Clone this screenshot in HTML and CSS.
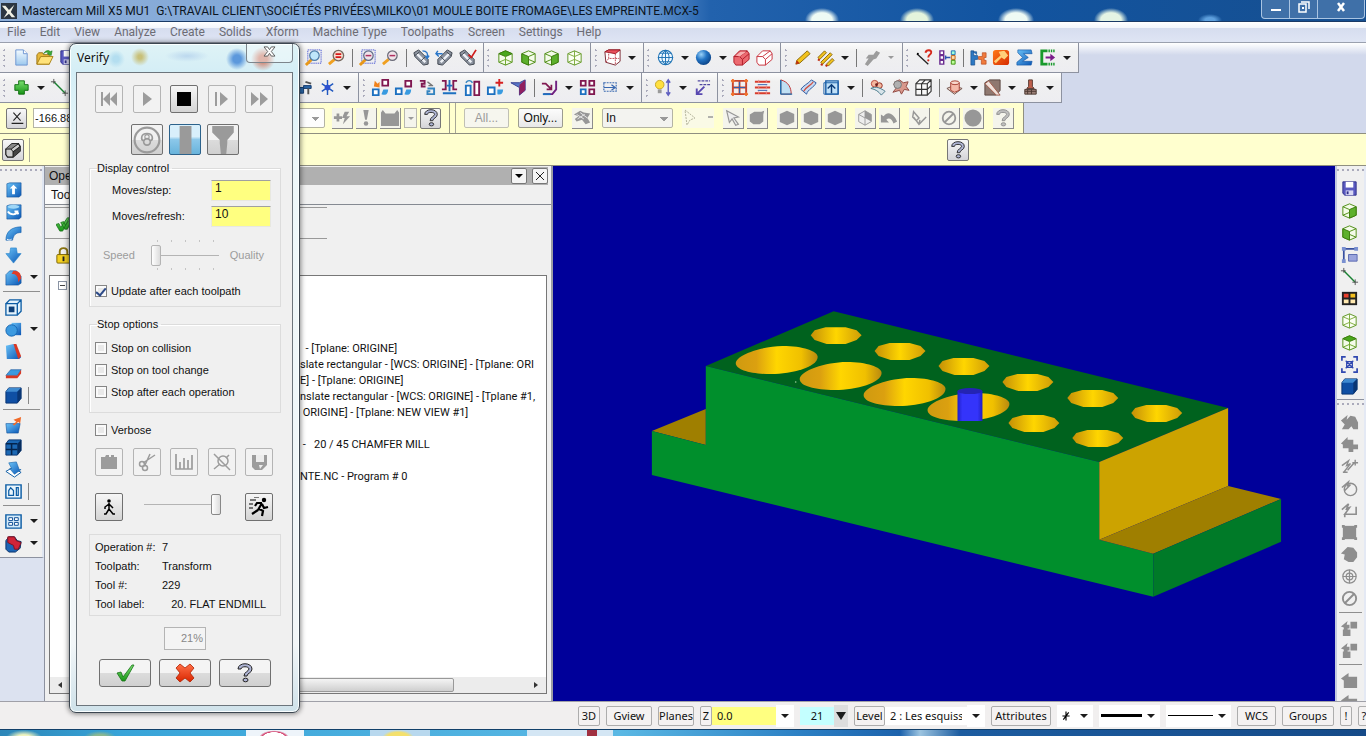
FILE: index.html
```html
<!DOCTYPE html>
<html lang="en">
<head>
<meta charset="utf-8">
<title>Mastercam Mill X5 MU1</title>
<link rel="stylesheet" href="styles.css">
</head>
<body>
<svg class="defs" aria-hidden="true">
  <defs>
    <linearGradient id="gb" x1="0" y1="0" x2="1" y2="1"><stop offset="0" stop-color="#6cc4f8"/><stop offset="1" stop-color="#0a55b4"/></linearGradient>
    <linearGradient id="gs" x1="0" y1="0" x2="0" y2="1"><stop offset="0" stop-color="#f4fbff"/><stop offset="1" stop-color="#9cc8ee"/></linearGradient>
    <linearGradient id="go" x1="0" y1="0" x2="1" y2="1"><stop offset="0" stop-color="#ff7a1a"/><stop offset="1" stop-color="#d62a00"/></linearGradient>
    <linearGradient id="gg" x1="0" y1="0" x2="0" y2="1"><stop offset="0" stop-color="#7be070"/><stop offset="1" stop-color="#179416"/></linearGradient>
    <linearGradient id="gr" x1="0" y1="0" x2="0" y2="1"><stop offset="0" stop-color="#ff7048"/><stop offset="1" stop-color="#d92600"/></linearGradient>
    <linearGradient id="gh" x1="0" y1="0" x2="1" y2="0"><stop offset="0" stop-color="#c48f08"/><stop offset=".5" stop-color="#ffd600"/><stop offset="1" stop-color="#cf9c08"/></linearGradient>
    <linearGradient id="gw" x1="0" y1="0" x2="1" y2="0"><stop offset="0" stop-color="#cf9a10"/><stop offset=".25" stop-color="#dba010"/><stop offset=".5" stop-color="#ffd600"/><stop offset=".8" stop-color="#f0c000"/><stop offset="1" stop-color="#b98a10"/></linearGradient>
    <linearGradient id="gc" x1="0" y1="0" x2="1" y2="0"><stop offset="0" stop-color="#2020c8"/><stop offset=".2" stop-color="#3434fa"/><stop offset=".8" stop-color="#3434fa"/><stop offset="1" stop-color="#2020c0"/></linearGradient>
    <radialGradient id="gball" cx=".35" cy=".3" r=".8"><stop offset="0" stop-color="#9ad2f8"/><stop offset=".45" stop-color="#2374c4"/><stop offset="1" stop-color="#063a7c"/></radialGradient>
  </defs>
  <symbol id="new" viewBox="0 0 20 20"><path d="M4 2h8l4 4v12H4z" fill="url(#gs)" stroke="#6d95d2"/><path d="M12 2v4h4" fill="#fff" stroke="#6d95d2"/></symbol>
  <symbol id="open" viewBox="0 0 20 20"><path d="M2 7l2-2h4l1 2h6v10H2z" fill="#e8b93a" stroke="#9c7414"/><path d="M2 17L6 9h13l-4 8z" fill="#ffe27a" stroke="#a98118"/><path d="M9 6c2-4 6-4 7-2l2-1-1 5-4-2 1-1c-1-1-3-1-5 1z" fill="#3cab36" stroke="#1c7a1c" stroke-width=".6"/></symbol>
  <symbol id="save" viewBox="0 0 20 20"><path d="M3 3h14v14H5l-2-2z" fill="#5a5ac0" stroke="#30308a"/><path d="M6 3h8v6H6z" fill="#fff"/><path d="M6 12h8v5H6z" fill="#d8d8f4"/><path d="M7 13h2v3H7z" fill="#30308a"/></symbol>
  <symbol id="magbox" viewBox="0 0 20 20"><path d="M4 2h14v14H4z" fill="none" stroke="#2233cc" stroke-dasharray="1 1"/><path d="M2 18l6-6" stroke="#e89818" stroke-width="3"/><circle cx="11" cy="8" r="5" fill="#bfe6fa" stroke="#4f7ca8" stroke-width="1.3"/></symbol>
  <symbol id="mageq" viewBox="0 0 20 20"><path d="M2 17l6-5" stroke="#f0a020" stroke-width="3"/><circle cx="12" cy="8" r="5.5" fill="#f6ded0" stroke="#77695f" stroke-width="1.4"/><path d="M9 6.500h6M9 9.500h6" stroke="#d61a1a" stroke-width="1.800"/></symbol>
  <symbol id="magboxm" viewBox="0 0 20 20"><path d="M4 2h14v14H4z" fill="none" stroke="#2233cc" stroke-dasharray="1 1"/><path d="M2 18l6-6" stroke="#e89818" stroke-width="3"/><circle cx="11" cy="8" r="5" fill="#efe4ea" stroke="#5f6c88" stroke-width="1.3"/><path d="M8 8h6" stroke="#b03060" stroke-width="1.600"/></symbol>
  <symbol id="magm" viewBox="0 0 20 20"><path d="M2 17l6-5" stroke="#f0a020" stroke-width="3"/><circle cx="12" cy="8" r="5" fill="#efe4ea" stroke="#6a6a78" stroke-width="1.3"/><path d="M9 8h6" stroke="#b03060" stroke-width="1.600"/></symbol>
  <symbol id="tube" viewBox="0 0 20 20"><path d="M2 5l5-3 10 10v5l-5 1L3 9z" fill="#8d94a0" stroke="#3c424c"/><path d="M5 6l9 9" stroke="#eef1f6" stroke-width="2.500"/><path d="M3 8l5-4M9 14l5-5" stroke="#3c424c"/></symbol>
  <symbol id="tubel" viewBox="0 0 20 20"><use href="#tube"/><path d="M11 3c5 0 6 3 5 7M14 8l2 3 2-3" fill="none" stroke="#2a76c8" stroke-width="1.500"/></symbol>
  <symbol id="tuber" viewBox="0 0 20 20"><g transform="matrix(-1 0 0 1 20 0)"><use href="#tube"/></g><path d="M1 6h7M3 3L1 6l3 3" fill="none" stroke="#2a76c8" stroke-width="1.500"/></symbol>
  <symbol id="tubex" viewBox="0 0 20 20"><use href="#tube"/><path d="M11 7l3 3 5-8" fill="none" stroke="#d01c1c" stroke-width="1.800"/></symbol>
  <symbol id="cubet" viewBox="0 0 20 20"><path d="M3 6l7-3 7 3v9l-7 3-7-3z" fill="#f4fbe9" stroke="#4d8c12"/><path d="M3 6l7-3 7 3-7 3z" fill="#4aa81c" stroke="#3a7a0c"/><path d="M10 9v9M3 15l7-3 7 3" fill="none" stroke="#6da52c"/></symbol>
  <symbol id="cubel" viewBox="0 0 20 20"><path d="M3 6l7-3 7 3v9l-7 3-7-3z" fill="#f4fbe9" stroke="#4d8c12"/><path d="M3 6l7 3v9l-7-3z" fill="#5db02c" stroke="#3a7a0c"/><path d="M10 9l7-3M10 12l7 3" fill="none" stroke="#4d8c12"/></symbol>
  <symbol id="cuber" viewBox="0 0 20 20"><path d="M3 6l7-3 7 3v9l-7 3-7-3z" fill="#f4fbe9" stroke="#4d8c12"/><path d="M10 9l7-3v9l-7 3z" fill="#5db02c" stroke="#3a7a0c"/><path d="M10 9L3 6M10 12l-7 3" fill="none" stroke="#4d8c12"/></symbol>
  <symbol id="cubew" viewBox="0 0 20 20"><path d="M3 6l7-3 7 3v9l-7 3-7-3z" fill="#fbfef4" stroke="#5d9422"/><path d="M3 6l7 3 7-3M10 9v9M3 15l7-3 7 3M10 3v9" fill="none" stroke="#7dab3c"/></symbol>
  <symbol id="cubered" viewBox="0 0 20 20"><path d="M2 4l4-2h12v12l-5 4-10-3z" fill="#fff" stroke="#7a2a34"/><path d="M2 4l4-2h12l-5 4z" fill="#e8505c" stroke="#a01c28"/><path d="M3 15l3-4h11M6 6v5M13 6v12" fill="none" stroke="#c04450" stroke-dasharray="2 1"/></symbol>
  <symbol id="globe" viewBox="0 0 20 20"><circle cx="10" cy="10" r="7.500" fill="#eef8ff" stroke="#1d72b4" stroke-width="1.200"/><path d="M10 2v16M2 10h16M4 5.500h12M4 14.500h12M10 2.500c-5 4-5 11 0 15M10 2.500c5 4 5 11 0 15" fill="none" stroke="#1d72b4"/></symbol>
  <symbol id="ball" viewBox="0 0 20 20"><circle cx="10" cy="10" r="8" fill="url(#gball)"/></symbol>
  <symbol id="redsolid" viewBox="0 0 20 20"><path d="M2 9l6-6h8l2 3v6l-7 6H4l-2-3z" fill="#ec6a70" stroke="#b01c28"/><path d="M2 9h6l3 3v6M8 9l8-6M11 12l7-6" fill="none" stroke="#b01c28"/><path d="M4 8l5-4h6l-7 5z" fill="#f8b0b0"/></symbol>
  <symbol id="redwire" viewBox="0 0 20 20"><path d="M2 9l6-6h8l2 3v6l-7 6H4l-2-3z" fill="#fff" stroke="#c8323c"/><path d="M2 9h6l3 3v6M8 9l8-6M11 12l7-6" fill="none" stroke="#c8323c"/></symbol>
  <symbol id="pencil" viewBox="0 0 20 20"><path d="M3 17l1-4L15 3l3 3L7 16z" fill="#f2c21c" stroke="#8a6a10"/><path d="M3 17l1-4 3 3z" fill="#c02c10"/></symbol>
  <symbol id="pencils" viewBox="0 0 20 20"><path d="M2 10l7-7 2 2-7 7zM5 15L15 5l2 2L7 17zM11 17l6-6 2 2-6 6z" fill="#f2c21c" stroke="#8a6a10"/><path d="M2 12l2 1M5 17l2 1M10 18l2 1" stroke="#c02c10" stroke-width="2"/></symbol>
  <symbol id="greypen" viewBox="0 0 20 20"><path d="M3 17l4-6H4l3-4h5l3-4 4 2-4 6-3 1-6 7z" fill="#9c9c9c"/></symbol>
  <symbol id="lineq" viewBox="0 0 20 20"><path d="M2 6l12 11" stroke="#222" stroke-width="1.400"/><circle cx="3" cy="6" r="1" /><path d="M11 5c1-4 7-3 6 0 0 2-3 2-3 5" fill="none" stroke="#d62a1c" stroke-width="2"/><circle cx="14" cy="13" r="1.200" fill="#d62a1c"/></symbol>
  <symbol id="cmp" viewBox="0 0 20 20"><path d="M2 3h4v4H2zM2 8h4v4H2zM2 13h4v4H2z" fill="#fff" stroke="#6a2c90" stroke-width="1.500"/><path d="M14 3h4v4h-4z" fill="#9fd" stroke="#1c70b0"/><path d="M14 8h4v4h-4z" fill="#fda" stroke="#c06010"/><path d="M14 13h4v4h-4z" fill="#bf9" stroke="#409010"/><path d="M8 10h5M8 8v4" stroke="#2c50b0" stroke-width="1.500"/></symbol>
  <symbol id="robots" viewBox="0 0 20 20"><path d="M2 3h3v5h4v4H6v6H2zM4 4h4v3" fill="#2c78c4" stroke="#154a8a" stroke-width=".7"/><path d="M18 5h-4v4h-4v3h3v5h5v-4h-2v-3h2z" fill="#f07a3c" stroke="#b8481c" stroke-width=".7"/></symbol>
  <symbol id="hammer" viewBox="0 0 20 20"><rect x="1" y="2" width="17" height="16" rx="3" fill="url(#go)"/><path d="M7 4l6-1 4 5-4 4-3-2-6 6-2-2 7-6z" fill="#ffcf7a"/></symbol>
  <symbol id="sigma" viewBox="0 0 20 20"><path d="M3 2h14l1 4H9l5 4-6 4h10l-1 4H2v-3l6-5-5-5z" fill="url(#gb)" stroke="#1458a8" stroke-width=".7"/></symbol>
  <symbol id="brkt" viewBox="0 0 20 20"><path d="M10 3H4v14h6" fill="none" stroke="#189a2c" stroke-width="3"/><path d="M11 3h7M11 17h7" stroke="#189a2c" stroke-width="3" stroke-dasharray="1.500 1"/><path d="M8 9h5V6l5 4-5 4v-3H8z" fill="#7a1c8a"/></symbol>
  <symbol id="plus" viewBox="0 0 20 20"><path d="M7 3h6v4h4v6h-4v4H7v-4H3V7h4z" fill="url(#gg)" stroke="#127012"/></symbol>
  <symbol id="lineadd" viewBox="0 0 20 20"><path d="M4 4l12 12" stroke="#188030" stroke-width="1.500"/><path d="M1 4h5M4 1v5M13 16h6M16 13v6" stroke="#555"/></symbol>
  <symbol id="spray" viewBox="0 0 20 20"><path d="M2 10h7v6H2zM9 8h8v3H9z" fill="#2c68a8" stroke="#143c70"/><path d="M11 4l6 2M14 11v6" stroke="#555" stroke-width="2"/></symbol>
  <symbol id="star" viewBox="0 0 20 20"><path d="M10 2v16M4 6l12 8M16 6L4 14" stroke="#2058c0" stroke-width="1.500"/><circle cx="10" cy="10" r="3" fill="#2c50d0"/></symbol>
  <symbol id="t1" viewBox="0 0 20 20"><path d="M12 2h6v6h-6z" fill="#fff" stroke="#801850" stroke-width="2"/><path d="M2 12h6v6H2z" fill="#fff" stroke="#1c70c0" stroke-width="2"/><path d="M11 17l2-5h5c0 4-2 7-7 5z" fill="#389ae0"/><path d="M3 9l1-6 3 3 2-2v6z" fill="#f0821c"/></symbol>
  <symbol id="t2" viewBox="0 0 20 20"><path d="M12 3h6v6h-6z" fill="#fff" stroke="#801850" stroke-width="2"/><path d="M2 11h6v6H2z" fill="#fff" stroke="#1c70c0" stroke-width="2"/><path d="M11 17l2-5h5c0 4-2 7-7 5z" fill="#389ae0"/></symbol>
  <symbol id="t3" viewBox="0 0 20 20"><path d="M3 3h5v3H5v3h4" fill="none" stroke="#801850" stroke-width="2"/><path d="M11 11h7v6h-7v-3h3" fill="none" stroke="#3484c0" stroke-width="2"/><path d="M11 4l5 4M12 8l5 0" stroke="#777" stroke-width="1.500"/></symbol>
  <symbol id="t4" viewBox="0 0 20 20"><path d="M2 3h4v9H2M18 3h-4v9h4" fill="none" stroke="#801850" stroke-width="2"/><path d="M10 2v12M3 16h14M7 8h6" stroke="#1c70c0" stroke-width="2"/></symbol>
  <symbol id="t5" viewBox="0 0 20 20"><path d="M3 8h5v10H3z" fill="#fff" stroke="#1c70c0" stroke-width="2"/><path d="M12 4h5v14h-5z" fill="#fff" stroke="#801850" stroke-width="2"/><path d="M3 5c2-3 5-3 7 0" fill="none" stroke="#3484c0" stroke-width="1.500"/></symbol>
  <symbol id="t6" viewBox="0 0 20 20"><path d="M2 10h7v7H2z" fill="#fff" stroke="#1c70c0" stroke-width="2"/><path d="M12 17v-5h6c0 4-2 6-6 5z" fill="#389ae0"/><path d="M14 1v8M10 5h8" stroke="#d62020" stroke-width="2"/></symbol>
  <symbol id="t7" viewBox="0 0 20 20"><path d="M2 5h9l6-3v11l-6 5v-8z" fill="#5a78c8" stroke="#343c90"/><path d="M11 7l6-5v11l-6 5z" fill="#902060"/></symbol>
  <symbol id="t8" viewBox="0 0 20 20"><path d="M2 6h4l5 5M7 12h5V7" fill="none" stroke="#801850" stroke-width="1.800"/><path d="M17 3v9l-4 5H4" fill="none" stroke="#702080" stroke-width="2"/><path d="M3 17h8" stroke="#1c70c0" stroke-width="2"/></symbol>
  <symbol id="four" viewBox="0 0 20 20"><path d="M3 3h5v5H3zM12 3h5v5h-5zM12 12h5v5h-5z" fill="#fff" stroke="#801850" stroke-width="2"/><path d="M3 12h5v5H3z" fill="#fff" stroke="#1c70c0" stroke-width="2"/></symbol>
  <symbol id="dim" viewBox="0 0 20 20"><path d="M3 5h13v9H3z" fill="none" stroke="#3868b0" stroke-width="1.200" stroke-dasharray="2 1"/><path d="M3 10h11M11 7l4 3-4 3" fill="none" stroke="#3868b0" stroke-width="1.300"/></symbol>
  <symbol id="bulb" viewBox="0 0 20 20"><circle cx="6" cy="7" r="4.500" fill="#ffe040" stroke="#c8a820"/><path d="M4 12h4v4H4z" fill="#9a9a9a"/><path d="M15 3v14M13 5l2-3 2 3M13 15l2 3 2-3" fill="none" stroke="#6060c0" stroke-width="1.500"/></symbol>
  <symbol id="dashes" viewBox="0 0 20 20"><path d="M6 3h13M8 7h11" stroke="#5048a0" stroke-width="1.500" stroke-dasharray="3 1"/><path d="M13 9l-8 8M5 11v6h6" fill="none" stroke="#5848b0" stroke-width="2"/></symbol>
  <symbol id="grid" viewBox="0 0 20 20"><path d="M3 3h14v14H3zM10 3v14M3 10h14" fill="none" stroke="#c8442c" stroke-width="2"/><path d="M10 4v12M4 10h12" stroke="#3060b0"/><path d="M1 3h4M15 3h4M1 17h4M15 17h4M3 1v4M17 1v4M3 15v4M17 15v4" stroke="#f0702c" stroke-width="2"/></symbol>
  <symbol id="ruled" viewBox="0 0 20 20"><path d="M2 4h16M2 10h16M2 16h16" stroke="#d83c2c" stroke-width="2"/><path d="M5 7h10M5 13h10" stroke="#3060b0"/><path d="M6 2v16M14 2v16" stroke="#e88" stroke-dasharray="3 3"/></symbol>
  <symbol id="rev" viewBox="0 0 20 20"><path d="M5 2c8 2 11 8 11 15H5z" fill="#bfe0f4" stroke="#c03030"/><path d="M5 2v15M5 17h12" stroke="#2070b0" stroke-width="1.500"/></symbol>
  <symbol id="sweep" viewBox="0 0 20 20"><path d="M2 12C4 8 10 6 13 2l5 3c-2 5-9 7-10 12z" fill="#c4daf4" stroke="#2c58a0"/><path d="M5 14c2-5 8-6 10-10" fill="none" stroke="#d05040" stroke-width="1.300"/></symbol>
  <symbol id="up" viewBox="0 0 20 20"><path d="M4 3h13v14H4z" fill="#bfe0f8" stroke="#1c60a8" stroke-width="1.500"/><path d="M2 5h15v12H2z" fill="none" stroke="#1c60a8"/><path d="M10 16V8M6 11l4-4 4 4" fill="none" stroke="#0b3c78" stroke-width="1.500"/></symbol>
  <symbol id="crowd" viewBox="0 0 20 20"><circle cx="7" cy="6" r="3.500" fill="#f4b8a0" stroke="#b8483c"/><circle cx="12" cy="8" r="3" fill="#f4b8a0" stroke="#902c20"/><path d="M3 11c5-3 11 0 15 3l-4 4c-3-4-6-6-11-7z" fill="#d8e4ea" stroke="#48788a"/><circle cx="9" cy="7" r="1.500" fill="#701c1c"/></symbol>
  <symbol id="trim" viewBox="0 0 20 20"><path d="M4 4l5-2 4 3 5-1-2 5 3 4-5-1-3 5-2-4-7 2 4-5-3-3z" fill="#d8988c" stroke="#904840"/><circle cx="7" cy="7" r="4" fill="#b0b0b0" stroke="#777"/></symbol>
  <symbol id="wirebox" viewBox="0 0 20 20"><path d="M2 6h12v12H2zM2 6l4-4h12v12l-4 4M14 6l4-4M8 6v12M2 12h12M14 12l4-4M8 6l4-4M12 2" fill="#fff" fill-opacity=".6" stroke="#333" stroke-width="1.200"/></symbol>
  <symbol id="cyl" viewBox="0 0 20 20"><path d="M2 11l7-3 9 3-8 6z" fill="#ead8d0" stroke="#705048"/><path d="M6 5v8l4 2 5-2V5z" fill="#f4b8a8" stroke="#a84034"/><ellipse cx="10.500" cy="5" rx="4.500" ry="2" fill="#f8d8cc" stroke="#a84034"/></symbol>
  <symbol id="rough" viewBox="0 0 20 20"><path d="M2 5l5-3h11v11l-4 5H2z" fill="#8f7870" stroke="#5a4640"/><path d="M2 6l12 12h4L6 3z" fill="#efe2dc" stroke="#a05848"/></symbol>
  <symbol id="stamp" viewBox="0 0 20 20"><path d="M8 2h4v7l2 2H6l2-2z" fill="#c0604c" stroke="#5a3a30"/><path d="M4 12h12v5H4z" fill="#9c8078" stroke="#4a3830"/><path d="M4 14h12M7 12v5M11 12v5" stroke="#4a3830"/></symbol>

  <symbol id="bolt" viewBox="0 0 20 20"><path d="M1 8h3V5h3v3h3v3H7v3H4v-3H1z" fill="currentColor"/><path d="M13 3h5l-3 5h4l-8 9 2-7h-3z" fill="currentColor"/></symbol>
  <symbol id="bang" viewBox="0 0 20 20"><path d="M7 1h6l-2 11H9z" fill="currentColor"/><circle cx="10" cy="16" r="2.500" fill="currentColor"/></symbol>
  <symbol id="cat" viewBox="0 0 20 20"><path d="M0 19V4l2-3 3 4h10l3-4 2 3v15z" fill="currentColor"/></symbol>
  <symbol id="q" viewBox="0 0 20 20"><path d="M3 6c0-7 14-7 14 0 0 4-5 4-5 7H9c0-4 5-5 5-7 0-3-8-3-8 0z" fill="var(--qf,#aeb4d4)" stroke="var(--qs,#222)"/><ellipse cx="10.500" cy="17" rx="2.500" ry="1.800" fill="var(--qf,#aeb4d4)" stroke="var(--qs,#222)"/></symbol>
  <symbol id="filt" viewBox="0 0 20 20"><path d="M1 6l7-4 4 2 7 1-3 5 3 5-5 2-4-5-6 2-2-3 4-3z" fill="currentColor"/><path d="M4 6l8 5M8 4l8 6M5 11l8-5" stroke="#eee"/></symbol>
  <symbol id="cursor" viewBox="0 0 20 20"><path d="M3 2l13 7-5 1 5 7-3 1-4-7-3 4z" fill="#eee" stroke="currentColor" stroke-width="1.300"/></symbol>
  <symbol id="hex" viewBox="0 0 20 20"><path d="M10 2l8 3.500v9L10 18l-8-3.500v-9z" fill="currentColor"/></symbol>
  <symbol id="blob" viewBox="0 0 20 20"><path d="M2 6l5-3h8l3-1-1 4v8l-4 3H6l-4-3z" fill="currentColor"/></symbol>
  <symbol id="half" viewBox="0 0 20 20"><path d="M3 6l7-4 7 4v8l-7 4-7-4zM10 2v16M3 6l7 4" fill="#eee" stroke="currentColor"/><path d="M10 2l7 4v8l-7-4z" fill="currentColor"/></symbol>
  <symbol id="undo" viewBox="0 0 20 20"><path d="M1 15V6l3 2c5-7 12-2 15 6l-4 2c-2-5-5-7-8-4l3 3z" fill="currentColor"/></symbol>
  <symbol id="chk" viewBox="0 0 20 20"><path d="M4 3l6 7-3 3-4-4zM4 9l6 8 8-8M10 17l1-5" fill="none" stroke="currentColor" stroke-width="1.600"/></symbol>
  <symbol id="no" viewBox="0 0 20 20"><circle cx="10" cy="10" r="7" fill="none" stroke="currentColor" stroke-width="2"/><path d="M5 15L15 5" stroke="currentColor" stroke-width="2"/></symbol>
  <symbol id="disc" viewBox="0 0 20 20"><circle cx="10" cy="10" r="9.500" fill="currentColor"/></symbol>
  <symbol id="solid" viewBox="0 0 20 20"><path d="M2 9l7-6h7l2 3v5l-8 7H4l-2-3z" fill="#ccc" stroke="#111" stroke-width="1.300"/><path d="M10 12l8-6v5l-8 7z" fill="#444"/><path d="M2 9h6l8-6H9z" fill="#888"/><path d="M2 9h6l2 3 8-6M10 12v6M8 9l8-6" fill="none" stroke="#111"/></symbol>

  <symbol id="s1" viewBox="0 0 20 20"><path d="M3 4l3-1h12v13l-2 2H3z" fill="url(#gb)" stroke="#0c4c94" stroke-width=".6"/><path d="M10 5l4 4h-2.500v6h-3V9H6z" fill="#fff"/></symbol>
  <symbol id="s2" viewBox="0 0 20 20"><path d="M3 4l3-1h12v13l-2 2H3z" fill="url(#gb)" stroke="#0c4c94" stroke-width=".6"/><ellipse cx="10" cy="5" rx="6" ry="2" fill="#9fd6f6"/><path d="M4 10c3 4 9 4 10 0h-3M14 10l1 3" fill="none" stroke="#fff" stroke-width="2"/></symbol>
  <symbol id="s3" viewBox="0 0 20 20"><path d="M2 17C2 8 8 3 18 3v6c-6 0-8 3-9 8z" fill="url(#gb)" stroke="#0c5aa8" stroke-width=".6"/><path d="M3 16c2 1 4 1 5 0" stroke="#fff" fill="none"/></symbol>
  <symbol id="s4" viewBox="0 0 20 20"><path d="M7 2h6l1 6h4l-8 10-8-10h4z" fill="url(#gb)" stroke="#2080c8" stroke-width=".6"/></symbol>
  <symbol id="s5" viewBox="0 0 20 20"><path d="M2 7l4-4h7l5 6v7l-3 2H2z" fill="url(#gb)" stroke="#0c4c94" stroke-width=".6"/><path d="M10 3c6 0 8 3 8 8l-3 4c0-6-2-9-7-9z" fill="#e03c28"/></symbol>
  <symbol id="s6" viewBox="0 0 20 20"><path d="M2 6h12v12H2zM2 6l4-4h12v12l-4 4M14 6l4-4" fill="#e4f3fc" stroke="#0c5ca4" stroke-width="1.400"/><path d="M5 9h6v6H5z" fill="#0d3f78"/></symbol>
  <symbol id="s7" viewBox="0 0 20 20"><path d="M8 3h10v13H8z" fill="url(#gb)"/><circle cx="8" cy="11" r="6" fill="#3c9ae0" stroke="#1464b0"/></symbol>
  <symbol id="s8" viewBox="0 0 20 20"><path d="M2 4l8-2 8 14-2 2H3z" fill="url(#gb)"/><path d="M10 2h3l5 13-3 3z" fill="#d83824"/></symbol>
  <symbol id="s9" viewBox="0 0 20 20"><path d="M2 12l5-6h11l-4 6z" fill="#3c9ae0" stroke="#0c4c94" stroke-width=".6"/><path d="M2 12h12l4-6v4l-4 5H2z" fill="#d83824"/></symbol>
  <symbol id="s10" viewBox="0 0 20 20"><path d="M2 6l3-4h13v11l-4 5H2z" fill="#0f4fa4" stroke="#083470"/><path d="M2 6l3-4h13l-4 4z" fill="#3f8ad0"/><path d="M14 6l4-4v11l-4 5z" fill="#0a3674"/></symbol>
  <symbol id="s11" viewBox="0 0 20 20"><path d="M2 8h15l-2 10H3z" fill="url(#gb)" stroke="#0c4c94" stroke-width=".6"/><path d="M9 9l4-3-3-2 8-3-1 7-2-2-4 4z" fill="#f06a28"/></symbol>
  <symbol id="s12" viewBox="0 0 20 20"><path d="M2 6l3-4h13v11l-4 5H2z" fill="#1b68b4" stroke="#083470"/><path d="M14 6l4-4v11l-4 5z" fill="#062c5c"/><path d="M8 6v12M2 12h12M2 6h12" stroke="#04244c" stroke-width="1.600"/></symbol>
  <symbol id="s13" viewBox="0 0 20 20"><path d="M2 12l7-4 9 5-7 5z" fill="#fff" stroke="#0c5ca4"/><path d="M5 3l8-1 3 8h2l-7 5-5-6h2z" fill="url(#gb)" stroke="#0c5ca4" stroke-width=".6"/></symbol>
  <symbol id="s14" viewBox="0 0 20 20"><path d="M2 3h16v14H2z" fill="#eaf5fc" stroke="#0c5ca4" stroke-width="1.500"/><path d="M5 14V9l2-3 3 3v5zM13 6h2v8h-2z" fill="none" stroke="#0c5ca4" stroke-width="1.300"/></symbol>
  <symbol id="s15" viewBox="0 0 20 20"><path d="M2 3h16v14H2z" fill="#d7ecfa" stroke="#0c5ca4" stroke-width="1.500"/><path d="M5 6h4v3H5zM11 6h4v3h-4zM5 11h4v3H5zM11 11h4v3h-4z" fill="#fff" stroke="#0c4c94"/></symbol>
  <symbol id="s16" viewBox="0 0 20 20"><path d="M2 7l3-4h6l3 4 4 1-1 7-5 4H5l-3-3z" fill="#1c64b4" stroke="#0a3068"/><path d="M4 3h7l2 4 5 2-3 7h-4l-1-4-6-3z" fill="#d02438" stroke="#801020"/></symbol>

  <symbol id="r4" viewBox="0 0 20 20"><path d="M4 17V4h13" fill="none" stroke="#3850a0" stroke-width="1.800"/><path d="M2 2h4v4H2zM15 2h4v4h-4zM2 15h4v4H2z" fill="#7a90d0"/><path d="M9 10h9v7H9z" fill="#9aa4dc" stroke="#5868b0"/></symbol>
  <symbol id="r6" viewBox="0 0 20 20"><path d="M2 3h16v14H2z" fill="#222"/><path d="M4 5h5v4H4z" fill="#e8402c"/><path d="M11 5h5v4h-5z" fill="#f4c020"/><path d="M4 11h5v4H4zM11 11h5v4h-5z" fill="#ffe9b0"/></symbol>
  <symbol id="r9" viewBox="0 0 20 20"><path d="M2 6V2h4M14 2h4v4M18 14v4h-4M6 18H2v-4" fill="none" stroke="#3048b0" stroke-width="1.800"/><path d="M6 6l8 8M14 6l-8 8M7 7h6v6H7z" fill="none" stroke="#3048b0" stroke-width="1.300"/></symbol>
  <symbol id="g1" viewBox="0 0 20 20"><path d="M1 8l7-6-1 5 4-4 5 1 3 6v7h-5l-2-3-3 3H2l3-5z" fill="currentColor"/></symbol>
  <symbol id="g2" viewBox="0 0 20 20"><path d="M1 9l7-7v3h6v5h5v5h-5v3H9v-4H3v-4z" fill="currentColor"/></symbol>
  <symbol id="g3" viewBox="0 0 20 20"><path d="M2 9l7-5-2 5 4-2-7 9M8 14l7-8M13 6h6M16 3v6M3 16h5" fill="none" stroke="currentColor" stroke-width="1.500"/></symbol>
  <symbol id="g4" viewBox="0 0 20 20"><circle cx="11" cy="11" r="6.500" fill="none" stroke="currentColor" stroke-width="1.500"/><path d="M2 9l7-6-1 4 3-1-6 6" fill="none" stroke="currentColor" stroke-width="1.500"/></symbol>
  <symbol id="g5" viewBox="0 0 20 20"><path d="M2 9l7-6-2 5 3-1-5 7h12V6M5 17v-3" fill="none" stroke="currentColor" stroke-width="1.700"/></symbol>
  <symbol id="g6" viewBox="0 0 20 20"><path d="M3 3h14v14H3z" fill="currentColor"/><path d="M2 2h3v3H2zM15 2h3v3h-3zM2 15h3v3H2zM15 15h3v3h-3z" fill="currentColor"/></symbol>
  <symbol id="g7" viewBox="0 0 20 20"><path d="M1 9l7-7 6 1 4 5v5l-4 5H9l-5-3 1-5z" fill="currentColor"/></symbol>
  <symbol id="g8" viewBox="0 0 20 20"><circle cx="10" cy="10" r="7" fill="none" stroke="currentColor" stroke-width="1.300"/><path d="M3 10h14M10 3v14" stroke="currentColor" stroke-width="1.300"/><circle cx="10" cy="10" r="3.500" fill="none" stroke="currentColor" stroke-width="1.300"/></symbol>
  <symbol id="g10" viewBox="0 0 20 20"><path d="M1 8l7-6-1 4h3v4H8v1H4v-2zM3 11h8v7H3zM11 3h7v7h-7z" fill="currentColor"/></symbol>
  <symbol id="g11" viewBox="0 0 20 20"><path d="M1 8l8-6v4h9v12H4v-8z" fill="currentColor"/></symbol>

  <symbol id="ok" viewBox="0 0 20 20"><path d="M2 10l4-1 2 5 9-12 2 0L10 18H7z" fill="url(#gg)" stroke="#177217" stroke-width=".8"/></symbol>
  <symbol id="okall" viewBox="0 0 20 20"><path d="M5 9l3-1 2 4 7-10h2L12 16H9zM0 11l3-1 2 4 7-10h2L7 18H4z" fill="url(#gg)" stroke="#177217" stroke-width=".8"/></symbol>
  <symbol id="xx" viewBox="0 0 20 20"><path d="M1 5l4-4 5 4 5-4 4 4-4 5 4 5-4 4-5-4-5 4-4-4 4-5z" fill="url(#gr)" stroke="#b02000" stroke-width=".8"/></symbol>
  <symbol id="lock" viewBox="0 0 20 20"><path d="M6 10V6c0-5 8-5 8 0v4" fill="none" stroke="#8a7410" stroke-width="2"/><rect x="3" y="9" width="14" height="9" rx="1" fill="#f4d020" stroke="#7a6408"/><path d="M9 11h2v5H9z" fill="#222"/></symbol>
  <symbol id="rew" viewBox="0 0 20 20"><path d="M3 3v14" stroke="currentColor" stroke-width="2"/><path d="M11 3v14l-7-7zM18 3v14l-7-7z" fill="currentColor"/></symbol>
  <symbol id="play" viewBox="0 0 20 20"><path d="M6 3l9 7-9 7z" fill="currentColor"/></symbol>
  <symbol id="stop" viewBox="0 0 20 20"><path d="M3 3h14v14H3z" fill="currentColor"/></symbol>
  <symbol id="step" viewBox="0 0 20 20"><path d="M4 3v14" stroke="currentColor" stroke-width="2"/><path d="M8 3l8 7-8 7z" fill="currentColor"/></symbol>
  <symbol id="ff" viewBox="0 0 20 20"><path d="M2 3l8 7-8 7zM11 3l8 7-8 7z" fill="currentColor"/></symbol>
  <symbol id="turb" viewBox="0 0 26 26"><circle cx="13" cy="13" r="11.500" fill="none" stroke="currentColor" stroke-width="2"/><path d="M13 7c-6 0-6 6-3 7-1 5 7 5 6 0 3-1 3-7-3-7zM10 14c1-3 5-3 6 0" fill="none" stroke="currentColor" stroke-width="1.500"/><circle cx="13" cy="10" r="2" fill="none" stroke="currentColor"/></symbol>
  <symbol id="bar" viewBox="0 0 26 26"><path d="M8 0h11v26H8z" fill="currentColor"/></symbol>
  <symbol id="fun" viewBox="0 0 26 26"><path d="M3 0h20v6l-6 7v3l-1 10h-5l-1-10v-3L3 6z" fill="currentColor"/></symbol>
  <symbol id="d1" viewBox="0 0 20 20"><path d="M2 5h4l1-2h3v2h2V3h3v2h3v12H2z" fill="currentColor"/></symbol>
  <symbol id="d2" viewBox="0 0 20 20"><path d="M6 11L18 3M8 13L13 2" stroke="currentColor" stroke-width="1.500"/><circle cx="5" cy="12" r="2.500" fill="none" stroke="currentColor" stroke-width="1.500"/><circle cx="8" cy="16" r="2.500" fill="none" stroke="currentColor" stroke-width="1.500"/></symbol>
  <symbol id="d3" viewBox="0 0 20 20"><path d="M2 2v15h16V3M6 17v-7M10 17V6M14 17v-9" fill="none" stroke="currentColor" stroke-width="1.700"/></symbol>
  <symbol id="d4" viewBox="0 0 20 20"><circle cx="11" cy="9" r="5" fill="none" stroke="currentColor" stroke-width="1.500"/><path d="M2 2l16 16M2 17l6-5M14 6l3-3" stroke="currentColor" stroke-width="1.500"/></symbol>
  <symbol id="d5" viewBox="0 0 20 20"><path d="M3 3h15v10l-5 5H6l-3-3z" fill="currentColor"/><path d="M7 3h8v7H7z" fill="#ededed"/><path d="M10 13l4 0-3 4z" fill="#ededed"/></symbol>
  <symbol id="walk" viewBox="0 0 20 20"><circle cx="10" cy="4" r="1.800" fill="#000"/><path d="M10 6v6l-3 5H5M10 12l4 5h2M10 7l-4 3v2M10 7l4 4" fill="none" stroke="#000" stroke-width="1.500"/></symbol>
  <symbol id="run" viewBox="0 0 20 20"><circle cx="15" cy="3" r="2.200" fill="#000"/><path d="M13 6l-4 7M9 13l-6 4M9 11l5 3-1 5M13 6L8 6 6 9M13 7l2 4 4-1" fill="none" stroke="#000" stroke-width="2.200"/><path d="M1 3h6M0 7h4M0 11h4M5 0h5" stroke="#000"/></symbol>
</svg>

<header class="title">
  <svg class="logo" viewBox="0 0 18 18" aria-hidden="true"><rect width="18" height="18" fill="#2b3542"/><path d="M1 3h4l4 5 6-6-4 8 5 6h-4l-3-4-6 5 4-7z" fill="#f1f1e6"/></svg>
  <h1>Mastercam Mill X5 MU1&nbsp; G:\TRAVAIL CLIENT\SOCIÉTÉS PRIVÉES\MILKO\01 MOULE BOITE FROMAGE\LES EMPREINTE.MCX-5</h1>
  <div class="win">
    <button aria-label="Minimize"><svg viewBox="0 0 12 12"><path d="M1 8h10v2H1z" fill="#fff"/></svg></button>
    <button aria-label="Restore"><svg viewBox="0 0 12 12"><path d="M3 1h8v7M1 3h7v8H1z" fill="none" stroke="#fff" stroke-width="1.500"/><path d="M4 6h2v2H4z" fill="#fff"/></svg></button>
    <button class="wc" aria-label="Close"><svg viewBox="0 0 12 12"><path d="M3 2l6 8M9 2L3 10" stroke="#fff" stroke-width="2.500"/></svg></button>
  </div>
</header>

<nav class="menu">
  <button>File</button><button>Edit</button><button>View</button><button>Analyze</button><button>Create</button><button>Solids</button><button>Xform</button><button>Machine Type</button><button>Toolpaths</button><button>Screen</button><button>Settings</button><button>Help</button>
</nav>

<div class="row">
  <div class="grp g1">
    <button class="tb" aria-label="New"><svg><use href="#new"/></svg></button>
    <button class="tb" aria-label="Open"><svg><use href="#open"/></svg></button>
    <button class="tb" aria-label="Save"><svg><use href="#save"/></svg></button>
    <span class="fill"></span>
    <button class="tb" aria-label="Zoom window"><svg><use href="#magbox"/></svg></button>
    <button class="tb" aria-label="Zoom target"><svg><use href="#mageq"/></svg></button>
    <i class="sep"></i>
    <button class="tb" aria-label="Unzoom previous"><svg><use href="#magboxm"/></svg></button>
    <button class="tb" aria-label="Unzoom"><svg><use href="#magm"/></svg></button>
    <i class="sep"></i>
    <button class="tb" aria-label="Rotate"><svg><use href="#tubel"/></svg></button>
    <button class="tb" aria-label="Rotate back"><svg><use href="#tuber"/></svg></button>
    <button class="tb" aria-label="Repaint"><svg><use href="#tubex"/></svg></button>
  </div>
  <div class="grp">
    <button class="tb" aria-label="Top view"><svg><use href="#cubet"/></svg></button>
    <button class="tb" aria-label="Front view"><svg><use href="#cubel"/></svg></button>
    <button class="tb" aria-label="Right view"><svg><use href="#cuber"/></svg></button>
    <button class="tb" aria-label="Isometric view"><svg><use href="#cubew"/></svg></button>
  </div>
  <div class="grp">
    <button class="tb" aria-label="Planes"><svg><use href="#cubered"/></svg></button><button class="dd" aria-label="Plane list"></button>
  </div>
  <div class="grp">
    <button class="tb" aria-label="Wireframe"><svg><use href="#globe"/></svg></button><button class="dd" aria-label="Wireframe list"></button>
    <button class="tb" aria-label="Shaded"><svg><use href="#ball"/></svg></button><button class="dd" aria-label="Shading list"></button>
    <button class="tb" aria-label="Solid shading"><svg><use href="#redsolid"/></svg></button>
    <button class="tb" aria-label="Hidden lines"><svg><use href="#redwire"/></svg></button>
  </div>
  <div class="grp">
    <button class="tb" aria-label="Delete"><svg><use href="#pencil"/></svg></button>
    <button class="tb" aria-label="Delete duplicates"><svg><use href="#pencils"/></svg></button><button class="dd" aria-label="Delete list"></button>
    <i class="sep"></i>
    <button class="tb" aria-label="Undelete"><svg><use href="#greypen"/></svg></button><button class="dd off" aria-label="Undelete list"></button>
  </div>
  <div class="grp">
    <button class="tb" aria-label="Analyze entity"><svg><use href="#lineq"/></svg></button>
    <button class="tb" aria-label="Compare"><svg><use href="#cmp"/></svg></button>
    <i class="sep"></i>
    <button class="tb" aria-label="Machine"><svg><use href="#robots"/></svg></button>
    <button class="tb" aria-label="Tools"><svg><use href="#hammer"/></svg></button>
    <button class="tb" aria-label="Sum"><svg><use href="#sigma"/></svg></button>
    <button class="tb" aria-label="Run"><svg><use href="#brkt"/></svg></button><button class="dd" aria-label="Run list"></button>
  </div>
</div>

<div class="row">
  <div class="grp g2">
    <button class="tb" aria-label="Point"><svg><use href="#plus"/></svg></button><button class="dd" aria-label="Point list"></button>
    <button class="tb" aria-label="Line"><svg><use href="#lineadd"/></svg></button>
    <span class="fill"></span>
    <button class="tb" aria-label="Surface"><svg><use href="#spray"/></svg></button>
    <button class="tb" aria-label="Pattern"><svg><use href="#star"/></svg></button><button class="dd" aria-label="Pattern list"></button>
  </div>
  <div class="grp">
    <button class="tb" aria-label="Dynamic"><svg><use href="#t1"/></svg></button>
    <button class="tb" aria-label="Translate"><svg><use href="#t2"/></svg></button>
    <button class="tb" aria-label="Rotate"><svg><use href="#t3"/></svg></button>
    <button class="tb" aria-label="Mirror"><svg><use href="#t4"/></svg></button>
    <button class="tb" aria-label="Scale"><svg><use href="#t5"/></svg></button>
    <button class="tb" aria-label="Move to origin"><svg><use href="#t6"/></svg></button>
    <button class="tb" aria-label="Project"><svg><use href="#t7"/></svg></button>
    <i class="sep"></i>
    <button class="tb" aria-label="Offset"><svg><use href="#t8"/></svg></button><button class="dd" aria-label="Offset list"></button>
    <button class="tb" aria-label="Array"><svg><use href="#four"/></svg></button>
    <button class="tb" aria-label="Stretch"><svg><use href="#dim"/></svg></button><button class="dd" aria-label="Stretch list"></button>
  </div>
  <div class="grp">
    <button class="tb" aria-label="Light"><svg><use href="#bulb"/></svg></button><button class="dd" aria-label="Light list"></button>
    <button class="tb" aria-label="Dimension"><svg><use href="#dashes"/></svg></button>
  </div>
  <div class="grp">
    <button class="tb" aria-label="Net surface"><svg><use href="#grid"/></svg></button>
    <button class="tb" aria-label="Ruled surface"><svg><use href="#ruled"/></svg></button>
    <button class="tb" aria-label="Revolved surface"><svg><use href="#rev"/></svg></button>
    <button class="tb" aria-label="Swept surface"><svg><use href="#sweep"/></svg></button>
    <button class="tb" aria-label="Extruded surface"><svg><use href="#up"/></svg></button><button class="dd" aria-label="Surface list"></button>
    <i class="sep"></i>
    <button class="tb" aria-label="Fillet"><svg><use href="#crowd"/></svg></button>
    <button class="tb" aria-label="Trim"><svg><use href="#trim"/></svg></button>
    <button class="tb" aria-label="Bounding box"><svg><use href="#wirebox"/></svg></button>
    <i class="sep"></i>
    <button class="tb" aria-label="Contour"><svg><use href="#cyl"/></svg></button><button class="dd" aria-label="Contour list"></button>
    <button class="tb" aria-label="Rough"><svg><use href="#rough"/></svg></button><button class="dd" aria-label="Rough list"></button>
    <button class="tb" aria-label="Engrave"><svg><use href="#stamp"/></svg></button><button class="dd" aria-label="Engrave list"></button>
  </div>
</div>

<div class="row ribbon">
  <div class="coords">
    <button class="sq lit" aria-label="Lock X"><svg viewBox="0 0 20 20"><path d="M6 4l8 9M14 4l-8 9M4 16h13" stroke="#222" stroke-width="1.200" fill="none"/></svg></button>
    <input class="xval" aria-label="X" value="-166.88">
    <span class="fill"></span>
    <select class="combo off" aria-label="Depth"><option></option></select>
    <button class="sq" aria-label="Fast point"><svg><use href="#bolt"/></svg></button>
    <button class="sq" aria-label="Alert"><svg><use href="#bang"/></svg></button>
    <button class="sq" aria-label="AutoCursor"><svg><use href="#cat"/></svg></button>
    <button class="dd off box" aria-label="AutoCursor list"></button>
    <button class="sq lit" aria-label="Help"><svg><use href="#q"/></svg></button>
  </div>
  <div class="select">
    <button class="txt dim">All...</button>
    <button class="txt">Only...</button>
    <button class="sq" aria-label="Filter"><svg><use href="#filt"/></svg></button>
    <select class="combo in" aria-label="Selection mode"><option>In</option></select>
    <span class="ghost"><svg viewBox="0 0 34 20" aria-hidden="true"><path d="M3 2l10 8-5 2-3 5z" fill="none" stroke="#b4b49c" stroke-dasharray="2 1"/><path d="M26 9h5" stroke="#999" stroke-width="1.500"/></svg></span>
    <span class="cl"><button class="sq" aria-label="Select"><svg><use href="#cursor"/></svg></button><button class="sq" aria-label="Solid"><svg><use href="#blob"/></svg></button></span>
    <span class="cl"><button class="sq" aria-label="Body"><svg><use href="#hex"/></svg></button><button class="sq" aria-label="Face"><svg><use href="#hex"/></svg></button><button class="sq" aria-label="Edge"><svg><use href="#hex"/></svg></button></span>
    <span class="cl"><button class="sq" aria-label="From back"><svg><use href="#half"/></svg></button><button class="sq" aria-label="Last"><svg><use href="#undo"/></svg></button></span>
    <span class="cl"><button class="sq" aria-label="Validate"><svg><use href="#chk"/></svg></button></span>
    <span class="cl"><button class="sq" aria-label="Unselect"><svg><use href="#no"/></svg></button><button class="sq" aria-label="End"><svg><use href="#disc"/></svg></button></span>
    <span class="cl grey"><button class="sq" aria-label="Help"><svg><use href="#q"/></svg></button></span>
  </div>
</div>

<div class="row prompt">
  <button class="sq lit" aria-label="Solids"><svg><use href="#solid"/></svg></button>
  <i class="bar"></i>
  <button class="sq lit" aria-label="Help"><svg><use href="#q"/></svg></button>
</div>

<main>
  <aside class="left">
    <div class="ltools">
      <div><button class="tb" aria-label="Extrude"><svg><use href="#s1"/></svg></button></div>
      <div><button class="tb" aria-label="Revolve"><svg><use href="#s2"/></svg></button></div>
      <div><button class="tb" aria-label="Sweep"><svg><use href="#s3"/></svg></button></div>
      <div><button class="tb" aria-label="Loft"><svg><use href="#s4"/></svg></button></div>
      <div><button class="tb" aria-label="Fillet"><svg><use href="#s5"/></svg></button><button class="dd" aria-label="Fillet list"></button></div>
      <hr>
      <div><button class="tb" aria-label="Shell"><svg><use href="#s6"/></svg></button></div>
      <div><button class="tb" aria-label="Boolean"><svg><use href="#s7"/></svg></button><button class="dd" aria-label="Boolean list"></button></div>
      <div><button class="tb" aria-label="Draft"><svg><use href="#s8"/></svg></button></div>
      <div><button class="tb" aria-label="Trim"><svg><use href="#s9"/></svg></button></div>
      <div class="vb"><button class="tb" aria-label="Block"><svg><use href="#s10"/></svg></button></div>
      <hr>
      <div><button class="tb" aria-label="Import"><svg><use href="#s11"/></svg></button></div>
      <div><button class="tb" aria-label="Features"><svg><use href="#s12"/></svg></button></div>
      <div><button class="tb" aria-label="From surfaces"><svg><use href="#s13"/></svg></button></div>
      <div class="vb"><button class="tb" aria-label="Layout"><svg><use href="#s14"/></svg></button></div>
      <hr>
      <div><button class="tb" aria-label="Views"><svg><use href="#s15"/></svg></button><button class="dd" aria-label="View list"></button></div>
      <div><button class="tb" aria-label="Combine"><svg><use href="#s16"/></svg></button><button class="dd" aria-label="Combine list"></button></div>
    </div>
  </aside>

  <section class="ops">
    <div class="opshead"><span>Ope</span><button class="mini" aria-label="Menu"><svg viewBox="0 0 10 10"><path d="M1 3h8L5 7z"/></svg></button><button class="mini" aria-label="Close"><svg viewBox="0 0 10 10"><path d="M1 1l8 8M9 1L1 9" stroke="#222"/></svg></button></div>
    <div class="opstab"><button>Too</button></div>
    <div class="opsbar"><button class="tb" aria-label="Select all"><svg><use href="#okall"/></svg></button></div>
    <div class="opslock"><button class="tb" aria-label="Lock"><svg><use href="#lock"/></svg></button></div>
    <div class="tree">
      <div class="node"><i class="exp"></i></div>
      <ul>
        <li>&nbsp; - [Tplane: ORIGINE]</li>
        <li>slate rectangular - [WCS: ORIGINE] - [Tplane: ORI</li>
        <li>E] - [Tplane: ORIGINE]</li>
        <li>nslate rectangular - [WCS: ORIGINE] - [Tplane #1,</li>
        <li>&nbsp;ORIGINE] - [Tplane: NEW VIEW #1]</li>
        <li></li>
        <li>&nbsp;- &nbsp; 20 / 45 CHAMFER MILL</li>
        <li></li>
        <li>NTE.NC - Program # 0</li>
      </ul>
      <div class="hbar"><svg viewBox="0 0 8 8" aria-hidden="true"><path d="M6 1v6L2 4z" fill="#333"/></svg><i></i><svg viewBox="0 0 8 8" aria-hidden="true"><path d="M2 1v6l4-3z" fill="#333"/></svg></div>
    </div>
  </section>

  <section class="view">
    <svg viewBox="552 166 783 535" role="img" aria-label="Machined block">
      <path d="M651 431l54-22v36z" fill="#9f7f00"/>
      <path d="M705 366l128-55 395 97-129 54z" fill="#00621e"/>
      <path d="M705 366l394 96v78l54 14v43L651 475v-44l54 14z" fill="#008f2c"/>
      <path d="M1099 462l129-54v78l-129 54z" fill="#cca300"/>
      <path d="M1099 540l129-54 53 13-128 55z" fill="#9f7f00"/>
      <path d="M1153 554l128-55v43l-128 55z" fill="#007a28"/>
      <g fill="url(#gh)">
        <path id="h" d="M810 335l4-5 11-3h20l11 3 5 5-5 5-11 4h-19l-12-4z"/>
        <use href="#h" x="64" y="16"/><use href="#h" x="128" y="31"/><use href="#h" x="192" y="47"/><use href="#h" x="257" y="63"/><use href="#h" x="321" y="78"/><use href="#h" x="198" y="88"/><use href="#h" x="262" y="103"/>
      </g>
      <g fill="url(#gw)">
        <path id="w" d="M735 363c0-8 26-17 47-17 20 0 35 5 35 11 0 10-25 17-47 17-20 0-35-4-35-11z"/>
        <use href="#w" x="64" y="16"/><use href="#w" x="128" y="32"/><use href="#w" x="192" y="47"/>
      </g>
      <path d="M957 391h25v30h-25z" fill="url(#gc)"/>
      <ellipse cx="969.500" cy="391" rx="12.500" ry="3" fill="#2424b4"/>
      <circle cx="795" cy="382" r=".8" fill="#9c9"/>
    </svg>
  </section>

  <aside class="right">
    <div class="rt">
      <button class="tb" aria-label="Save"><svg><use href="#save"/></svg></button>
      <button class="tb" aria-label="Right view"><svg><use href="#cuber"/></svg></button>
      <button class="tb" aria-label="Front view"><svg><use href="#cubel"/></svg></button>
      <button class="tb" aria-label="Rectangle"><svg><use href="#r4"/></svg></button>
      <button class="tb" aria-label="Line"><svg><use href="#lineadd"/></svg></button>
      <button class="tb" aria-label="Colors"><svg><use href="#r6"/></svg></button>
      <button class="tb" aria-label="Isometric view"><svg><use href="#cubew"/></svg></button>
      <button class="tb" aria-label="Top view"><svg><use href="#cubet"/></svg></button>
      <button class="tb" aria-label="Fit"><svg><use href="#r9"/></svg></button>
      <button class="tb" aria-label="Block"><svg><use href="#s10"/></svg></button>
    </div>
    <div class="rt grey">
      <button class="tb" aria-label="Quick mask 1"><svg><use href="#g1"/></svg></button>
      <button class="tb" aria-label="Quick mask 2"><svg><use href="#g2"/></svg></button>
      <button class="tb" aria-label="Quick mask 3"><svg><use href="#g3"/></svg></button>
      <button class="tb" aria-label="Quick mask 4"><svg><use href="#g4"/></svg></button>
      <button class="tb" aria-label="Quick mask 5"><svg><use href="#g5"/></svg></button>
      <button class="tb" aria-label="Quick mask 6"><svg><use href="#g6"/></svg></button>
      <button class="tb" aria-label="Quick mask 7"><svg><use href="#g7"/></svg></button>
      <button class="tb" aria-label="Quick mask 8"><svg><use href="#g8"/></svg></button>
      <button class="tb" aria-label="Clear"><svg><use href="#no"/></svg></button>
      <hr>
      <button class="tb" aria-label="Group"><svg><use href="#g10"/></svg></button>
      <button class="tb" aria-label="Result"><svg><use href="#g10"/></svg></button>
      <hr>
      <button class="tb" aria-label="Named group"><svg><use href="#g11"/></svg></button>
      <button class="tb" aria-label="Level group"><svg><use href="#g11"/></svg></button>
    </div>
  </aside>
</main>

<footer class="status">
  <button class="w1">3D</button>
  <button class="w2">Gview</button>
  <button class="w3">Planes</button>
  <span class="pair"><button class="w4">Z</button><input class="zval" aria-label="Z" value="0.0"><button class="dd tall" aria-label="Z list"></button></span>
  <span class="pair"><input class="cval" aria-label="Color" value="21"><button class="dd tall big" aria-label="Color list"></button></span>
  <span class="pair"><button class="w5">Level</button><input class="lval" aria-label="Level name" value="2 : Les esquisses"><button class="dd tall" aria-label="Level list"></button></span>
  <button class="w6">Attributes</button>
  <span class="pair pt"><svg viewBox="0 0 20 20" aria-hidden="true"><path d="M10 5v10M6 10h8M7 14l6-8" stroke="#000" stroke-width="1.300"/></svg><button class="dd tall" aria-label="Point style"></button></span>
  <span class="pair ln"><i class="thick"></i><button class="dd tall" aria-label="Line width"></button></span>
  <span class="pair ln"><i class="thin"></i><button class="dd tall" aria-label="Line style"></button></span>
  <button class="w7">WCS</button>
  <button class="w8">Groups</button>
  <button class="w9">!</button>
  <button class="w9 cut">?</button>
</footer>
<div class="taskbar"><i class="start"></i><i class="t1"></i><i class="t2"></i><i class="t3"></i></div>

<section class="dialog" role="dialog" aria-label="Verify">
  <header><h2>Verify</h2><button class="x" aria-label="Close"><svg viewBox="0 0 14 12"><path d="M1 1h4l2 3 2-3h4L9 6l4 5H9L7 8l-2 3H1l4-5z" fill="#fff" stroke="#555"/></svg></button></header>
  <div class="body">
    <div class="btns">
      <button class="db off" aria-label="Restart"><svg><use href="#rew"/></svg></button>
      <button class="db off" aria-label="Play"><svg><use href="#play"/></svg></button>
      <button class="db" aria-label="Stop"><svg><use href="#stop"/></svg></button>
      <button class="db off" aria-label="Step"><svg><use href="#step"/></svg></button>
      <button class="db off" aria-label="Fast forward"><svg><use href="#ff"/></svg></button>
    </div>
    <div class="btns mid">
      <button class="lb" aria-label="Turbo"><svg><use href="#turb"/></svg></button>
      <button class="lb on" aria-label="Simulate tool"><svg><use href="#bar"/></svg></button>
      <button class="lb" aria-label="Simulate holder"><svg><use href="#fun"/></svg></button>
    </div>
    <fieldset class="f1">
      <legend>Display control</legend>
      <div class="field"><label for="ms">Moves/step:</label><input id="ms" value="1"></div>
      <div class="field"><label for="mr">Moves/refresh:</label><input id="mr" value="10"></div>
      <div class="speed"><label for="sq">Speed</label><span class="ticks"><input id="sq" type="range" min="0" max="4" value="0" disabled></span><span>Quality</span></div>
      <label class="ck"><input type="checkbox" checked>Update after each toolpath</label>
    </fieldset>
    <fieldset class="f2">
      <legend>Stop options</legend>
      <label class="ck"><input type="checkbox">Stop on collision</label>
      <label class="ck"><input type="checkbox">Stop on tool change</label>
      <label class="ck"><input type="checkbox">Stop after each operation</label>
    </fieldset>
    <label class="ck verbose"><input type="checkbox">Verbose</label>
    <div class="btns">
      <button class="db off" aria-label="Options"><svg><use href="#d1"/></svg></button>
      <button class="db off" aria-label="Section"><svg><use href="#d2"/></svg></button>
      <button class="db off" aria-label="Measure"><svg><use href="#d3"/></svg></button>
      <button class="db off" aria-label="Zoom"><svg><use href="#d4"/></svg></button>
      <button class="db off" aria-label="Save STL"><svg><use href="#d5"/></svg></button>
    </div>
    <div class="btns pace">
      <button class="db" aria-label="Slow"><svg><use href="#walk"/></svg></button>
      <input type="range" aria-label="Speed" min="0" max="100" value="100">
      <button class="db" aria-label="Fast"><svg><use href="#run"/></svg></button>
    </div>
    <dl>
      <dt>Operation #:</dt><dd>7</dd>
      <dt>Toolpath:</dt><dd>Transform</dd>
      <dt>Tool #:</dt><dd>229</dd>
      <dt>Tool label:</dt><dd>&nbsp;&nbsp; 20. FLAT ENDMILL</dd>
    </dl>
    <output>21%</output>
    <div class="btns end">
      <button aria-label="OK"><svg><use href="#ok"/></svg></button>
      <button aria-label="Cancel"><svg><use href="#xx"/></svg></button>
      <button aria-label="Help"><svg><use href="#q"/></svg></button>
    </div>
  </div>
</section>
</body>
</html>
```
FILE: styles.css
```css
* { box-sizing: border-box; }
body {
  margin: 0;
  height: 100vh;
  display: flex;
  flex-direction: column;
  overflow: hidden;
  position: relative;
  background: #d2d9ec;
  font: 11px/16px "Liberation Sans", Arial, sans-serif;
  color: #111;
}
button, input, select { font: inherit; color: inherit; margin: 0; }
button { padding: 0; border: 0; background: none; }
h1, h2, ul, dl, dd, dt { margin: 0; padding: 0; font-weight: normal; }
.defs { position: absolute; width: 0; height: 0; }
.fill { flex: 1; }

/* window title */
.title {
  flex: none;
  height: 22px;
  display: flex;
  align-items: center;
  padding-left: 1px;
  border-bottom: 1px solid #1a3a66;
  background:
    radial-gradient(ellipse 17px 12px at 822px 20px, #eefaf4 60%, transparent),
    radial-gradient(ellipse 17px 12px at 917px 20px, #e4f4dc 60%, transparent),
    radial-gradient(ellipse 18px 12px at 1016px 20px, #eefaf4 60%, transparent),
    radial-gradient(ellipse 17px 12px at 1111px 20px, #e4f4e4 60%, transparent),
    radial-gradient(ellipse 12px 6px at 1210px 20px, #5ea0de 40%, transparent),
    linear-gradient(90deg, #8fb0da 0, #6d9bd3 640px, #2262ad 710px, #1254a0 1000px, #164f90 100%);
}
.logo { width: 16px; height: 18px; }
.title h1 { flex: 1; padding-left: 5px; font: 12px/20px Roboto, "Noto Sans", sans-serif; white-space: nowrap; color: #0b1420; }
.win { display: flex; align-self: flex-start; margin-right: 1px; border: 1px solid #a9c4e2; border-top: 0; border-radius: 0 0 4px 4px; background: #3f70a8; }
.win button { width: 28px; height: 18px; border-right: 1px solid #a9c4e2; }
.win .wc { width: 46px; border-right: 0; }
.win svg { width: 12px; height: 12px; }

.menu {
  flex: none;
  height: 21px;
  display: flex;
  align-items: center;
  border-bottom: 1px solid #9aa0ae;
  background: linear-gradient(#fff, #f2f5fb 30%, #d6ddef 31%, #dfe5f4);
  font: 12px/18px Roboto, "Noto Sans", sans-serif;
  color: #6c6c74;
}
.menu button { padding: 0 7px; }

/* toolbars */
.row { flex: none; height: 30px; display: flex; background: linear-gradient(#fff 0, #d2d9ec 12px); }
.row + .row { background: #d2d9ec; }
.grp {
  display: flex;
  align-items: center;
  padding: 0 4px 0 10px;
  border-right: 1px solid #8d92a0;
  border-bottom: 1px solid #8d92a0;
  background:
    radial-gradient(circle, #aab 1px, transparent 1px) 3px 5px / 3px 5px no-repeat,
    radial-gradient(circle, #aab 1px, transparent 1px) 3px 10px / 3px 5px no-repeat,
    radial-gradient(circle, #aab 1px, transparent 1px) 3px 15px / 3px 5px no-repeat,
    radial-gradient(circle, #aab 1px, transparent 1px) 3px 20px / 3px 5px no-repeat,
    linear-gradient(#fdfdfd, #f0f0f0 30%, #ededf1);
}
.g1 { flex: 0 0 484px; }
.g2 { flex: 0 0 359px; }
.tb { flex: none; width: 23px; height: 22px; display: flex; align-items: center; justify-content: center; }
.tb svg { width: 19px; height: 19px; }
.dd { flex: none; width: 15px; height: 22px; display: flex; align-items: center; justify-content: center; }
.dd::after { content: ""; border: 4px solid transparent; border-top-color: #1c1c1c; border-bottom: 0; }
.dd.off::after { border-top-color: #9a9a9a; border-width: 3px; border-bottom: 0; }
.sep { width: 8px; height: 18px; background: linear-gradient(#777, #777) center / 1px 100% no-repeat; }

.ribbon { height: 31px; align-items: stretch; border-bottom: 1px solid #8f8f80; }
.coords, .select { display: flex; align-items: center; background: #ffffcf; }
.coords { flex: 0 0 450px; gap: 3px; padding: 0 8px 0 6px; border-right: 1px solid #9a9a88; }
.select { gap: 9px; padding: 0 9px 0 8px; margin-right: auto; border-right: 1px solid #8f8f80; box-shadow: -5px 0 0 #ffffcf; border-left: 1px solid #a8a896; margin-left: 5px; }
.sq {
  flex: none;
  width: 21px;
  height: 21px;
  display: flex;
  align-items: center;
  justify-content: center;
  background: #f4f4ec;
  border-right: 1px solid #8c8c8c;
  border-bottom: 1px solid #8c8c8c;
  color: #979797;
}
.sq svg { width: 18px; height: 18px; }
.sq.lit { border: 1px solid #777; border-radius: 2px; background: linear-gradient(#f8f8f8, #d4d4d8); }
.cl { display: flex; gap: 3px; }
.grey { --qf: #bdbdbd; --qs: #8c8c8c; color: #8e8e8e; }
.xval { width: 60px; height: 20px; margin-left: 3px; border: 1px solid #b4b4a4; background: #fff; padding: 0 1px; font-size: 11px; }
.combo { height: 20px; border: 1px solid #b4b4a4; border-radius: 2px; appearance: none; font: 12px/16px "Liberation Sans", Arial, sans-serif; padding: 0 3px; }
.combo.off { width: 126px; margin-right: 4px; }
.combo, .combo.in { background: linear-gradient(45deg, transparent 50%, #999 50%) calc(100% - 8px) 8px / 4px 4px no-repeat, linear-gradient(-45deg, transparent 50%, #999 50%) calc(100% - 4px) 8px / 4px 4px no-repeat, #fdfdfd; }
.combo.in { width: 71px; background-color: #f3f3f0; }
.dd.box { width: 13px; height: 20px; border: 1px solid #b8b8b0; background: #f4f4ec; }
.txt { width: 45px; height: 20px; border: 1px solid #9c9c90; border-radius: 2px; background: linear-gradient(#fcfcfc, #e8e8e8); font-size: 12px; }
.txt.dim { color: #9a9a9a; border-color: #c0c0b4; background: #f6f6ee; }
.ghost { width: 32px; height: 20px; background: #fafae6; }
.ghost svg { width: 34px; height: 20px; }

.prompt, .row + .prompt { height: 32px; align-items: center; padding: 0 397px 0 2px; background: #ffffcf; border-bottom: 1px solid #8f8f80; justify-content: space-between; }
.prompt .bar { margin: 0 auto 0 5px; width: 1px; height: 24px; background: #a8a896; }
.prompt .sq { width: 22px; height: 22px; }

/* workspace */
main { flex: 1; min-height: 0; display: flex; }
.left { flex: 0 0 45px; min-width: 0; background: #dce2f0; border-right: 1px solid #8d92a0; }
.ltools { padding: 12px 1px 3px 2px; border-bottom: 1px solid #8d92a0; border-right: 2px solid #dfe6f2; background: radial-gradient(circle at 2px 4px, #aab 1px, transparent 1px) 4px 0 / 5px 8px repeat-x, #f0f0f0; }
.ltools div { height: 22px; display: flex; align-items: center; }
.ltools .vb::after { content: ""; width: 1px; height: 17px; background: #888; margin-left: 3px; }
.ltools .dd { margin-left: auto; }
hr { height: 1px; margin: 3px 1px 4px; border: 0; background: #8f8f8f; }

.ops { flex: 0 0 508px; min-width: 0; display: flex; flex-direction: column; background: #f0f0f0; border-right: 2px solid #9a9ca4; }
.opshead { height: 18px; margin: 1px 3px 0 0; padding: 0 0 0 4px; display: flex; align-items: center; gap: 5px; background: #b0b0b0; font-size: 12px; overflow: hidden; }
.opshead span { flex: 1; }
.mini { width: 16px; height: 16px; display: flex; align-items: center; justify-content: center; border: 1px solid #777; border-radius: 2px; background: #f4f4f4; }
.mini svg { width: 10px; height: 10px; }
.opstab { height: 20px; border-bottom: 1px solid #858a92; }
.opstab button { height: 19px; padding: 0 6px; background: #fbfbfb; font-size: 12px; }
.opsbar { width: 282px; height: 32px; margin-top: 2px; padding-left: 9px; display: flex; align-items: center; border-top: 1px solid #999; border-bottom: 1px solid #999; }
.opslock { padding: 5px 0 0 7px; height: 36px; }
.tree { flex: 1; margin: 0 4px 7px 4px; border: 1px solid #777; background: #fff; display: flex; flex-direction: column; font: 11px/16px Roboto, "Noto Sans", sans-serif; overflow: hidden; }
.node { height: 65px; padding: 5px 0 0 8px; }
.exp { display: block; width: 9px; height: 9px; border: 1px solid #8a94a4; background: linear-gradient(#444, #444) center / 5px 1px no-repeat; }
.tree ul { flex: 1; list-style: none; padding-left: 250px; white-space: nowrap; }
.tree li { height: 16px; }
.hbar { height: 16px; display: flex; align-items: center; justify-content: space-between; padding: 0 6px; background: #ececec; }
.hbar svg { width: 8px; height: 8px; }
.hbar i { flex: 1; margin: 0 78px 0 40px; height: 14px; border: 1px solid #999; border-radius: 2px; background: linear-gradient(#f4f4f4, #cfcfcf); }

.view { flex: 1; min-width: 0; background: #00009a; display: flex; }
.view svg { width: 100%; height: 100%; }
.right { flex: 0 0 31px; background: #e4e9f4; border-left: 2px solid #c4cade; overflow: hidden; }
.rt { width: 27px; padding: 11px 1px 2px; border-bottom: 1px solid #8d92a0; background: radial-gradient(circle at 2px 4px, #aab 1px, transparent 1px) 4px 0 / 5px 8px repeat-x, #f0f0f0; }

/* status */
.status { flex: none; height: 28px; display: flex; align-items: center; justify-content: flex-end; gap: 6px; background: #f1efef; border-top: 1px solid #a0a0a8; white-space: nowrap; overflow: hidden; font: 11px/16px "Noto Sans", sans-serif; }
.status > button, .w4, .w5 { flex: none; height: 20px; border: 1px solid #adadad; border-radius: 2px; background: #f4f2f2; text-align: center; }
.status .w1 { width: 22px; }
.status .w2 { width: 46px; }
.status .w3 { width: 36px; }
.w4 { width: 12px; }
.w5 { width: 31px; }
.status .w6 { width: 60px; }
.status .w7 { width: 39px; }
.status .w8 { width: 52px; }
.status .w9 { width: 12px; }
.status .cut { margin-right: -4px; }
.pair { flex: none; display: flex; align-items: center; height: 22px; }
.pair input { height: 18px; border: 0; padding: 0 5px; }
.dd.tall { background: #fff; width: 18px; }
.dd.big { width: 14px; background: #ddd; }
.dd.big::after { border-width: 8px 5px 0; }
.zval { width: 64px; background: #ffff80; }
.cval { width: 34px; background: #c4ffff; text-align: center; }
.lval { width: 82px; background: #fff; }
.pt, .ln { background: #fff; }
.pt svg { width: 18px; height: 20px; }
.ln i { width: 41px; margin-left: 2px; background: #000; }
.ln .thick { height: 3px; }
.ln .thin { height: 1px; width: 45px; }
.taskbar { flex: none; height: 7px; display: flex; border-top: 1px solid #12406a; background: linear-gradient(90deg, #2c86b8 0, #38a4d8 120px, #5ab8e4 620px, #2c80c4 800px, #1c62ac 900px, #9cc4e0 920px, #1c5ca0 960px, #154a88 100%); }
.taskbar i { height: 7px; flex: none; }
.taskbar .start { width: 246px; background: radial-gradient(ellipse 18px 8px at 24px 8px, #f0f4c0 40%, transparent), radial-gradient(ellipse 16px 6px at 100px 7px, #8cb890 40%, transparent); }
.taskbar .t1 { width: 58px; background: radial-gradient(ellipse 16px 8px at 28px 8px, #fff 70%, #d03060 75%, #eef4fa 95%); }
.taskbar .t2 { width: 60px; margin-left: 66px; background: radial-gradient(ellipse 16px 8px at 28px 8px, #f4e06c 70%, transparent), #b8d8ee; }
.taskbar .t3 { width: 86px; margin-left: 97px; background: linear-gradient(90deg, transparent 60px, #a03040 60px, #a03040 70px, transparent 70px), #d4e6f4; }

/* verify dialog */
.dialog {
  position: absolute;
  left: 69px;
  top: 43px;
  width: 231px;
  padding: 0 6px 6px;
  border: 1px solid #3c4650;
  border-radius: 7px;
  box-shadow: inset 0 0 0 1px #fbffff, 0 0 5px 1px rgba(0, 0, 0, .45);
  background:
    radial-gradient(circle at 70px 13px, #c8c078 2px, transparent 9px),
    radial-gradient(circle at 46px 15px, #b4def0 3px, transparent 9px),
    radial-gradient(ellipse 22px 6px at 117px 12px, #bcd8ee, transparent),
    radial-gradient(circle at 167px 15px, #5c98dc 4px, transparent 11px),
    radial-gradient(circle at 193px 15px, #d09080 4px, transparent 12px),
    linear-gradient(#dff3f6, #d4eef6 28px, #eef8fa 120px, #f2f6f8 600px, #cfe2ea);
}
.dialog header { height: 28px; display: flex; justify-content: space-between; }
.dialog h2 { font: 12px/28px "Noto Sans", "Open Sans", sans-serif; padding-left: 1px; }
.x { width: 47px; height: 19px; border: 1px solid #7d858c; border-top: 0; border-radius: 0 0 4px 4px; background: rgba(255, 255, 255, .35); }
.x svg { width: 13px; height: 11px; }
.body { border: 1px solid #6c757c; background: #f0f0f0; padding: 12px 11px 18px 12px; display: flex; flex-direction: column; }
.btns { display: flex; justify-content: space-between; padding: 0 8px 0 6px; }
.db { width: 28px; height: 28px; display: flex; align-items: center; justify-content: center; border: 1px solid #707070; border-radius: 2px; background: linear-gradient(#f6f6f6, #d4d4d4); color: #000; }
.db svg { width: 20px; height: 20px; }
.db.off { color: #9c9c9c; border-color: #b4b4b4; background: #f2f2f2; }
.mid { justify-content: center; gap: 6px; margin-top: 11px; padding: 0; }
.lb { width: 32px; height: 31px; border: 1px solid #707070; border-radius: 2px; background: linear-gradient(#f2f2f2 50%, #dcdcdc 51%, #d0d0d0); color: #9a9a9a; display: flex; align-items: center; justify-content: center; }
.lb svg { width: 28px; height: 28px; }
.lb.on { border-color: #2c628b; background: linear-gradient(#d8effb 40%, #8cc8ea 50%, #68b3db); }
fieldset { margin: 0; padding: 0 5px; border: 1px solid #dcdcdc; box-shadow: inset 1px 1px 0 #fff; min-width: 0; }
.f1 { margin-top: 5px; height: 147px; }
.f2 { margin-top: 9px; height: 97px; }
legend { margin-left: 2px; padding: 0 3px 0 0; line-height: 16px; }
.field { display: flex; align-items: center; justify-content: space-between; height: 22px; margin: 3px 4px 4px 17px; }
.field input { width: 60px; height: 21px; border: 1px solid #e8e8e0; border-top-color: #a0a0a0; background: #ffff80; padding: 0 3px 4px; font-size: 12px; }
.speed { display: flex; align-items: center; gap: 16px; height: 34px; margin: 11px 0 0 8px; color: #9c9c9c; }
.ticks { width: 68px; height: 32px; display: flex; align-items: center; background: repeating-linear-gradient(90deg, transparent 0 4px, #c4c4c4 4px 5px, transparent 5px 14px) 2px 1px / 62px 2px no-repeat, repeating-linear-gradient(90deg, transparent 0 4px, #c4c4c4 4px 5px, transparent 5px 14px) 2px 29px / 62px 2px no-repeat; }
.speed > span:last-child { margin-left: -5px; }
input[type=range] { appearance: none; width: 100%; height: 22px; margin: 0; background: linear-gradient(#b4b4b4, #b4b4b4) center / 100% 1px no-repeat; }
input[type=range]::-webkit-slider-thumb { appearance: none; width: 10px; height: 21px; border: 1px solid #888; border-radius: 2px; background: linear-gradient(90deg, #fff, #dcdcdc); }
input[type=range]:disabled::-webkit-slider-thumb { border-color: #b4b4b4; }
.ck { display: flex; align-items: center; height: 22px; gap: 4px; }
.f1 .ck { margin-top: 8px; }
.f2 .ck:first-of-type { margin-top: 5px; }
.ck input { appearance: none; width: 12px; height: 12px; border: 1px solid #858585; background: #e9e9e9; box-shadow: inset 0 0 0 2px #fafafa; display: flex; justify-content: center; }
.ck input:checked::after { content: ""; width: 4px; height: 8px; border: solid #2c4a88; border-width: 0 2px 2px 0; transform: rotate(40deg); }
.verbose { margin: 6px 0 7px 6px; }
.pace { margin-top: 16px; align-items: center; }
.pace input[type=range] { width: 77px; height: 24px; margin: 0 3px 6px 0; }
dl { margin-top: 12px; padding: 2px 5px 0; height: 82px; border: 1px solid #dcdcdc; display: grid; grid-template-columns: 67px 1fr; grid-auto-rows: 19px; align-items: center; white-space: nowrap; }
output { display: block; width: 42px; height: 23px; margin: 11px 0 0 75px; border: 1px solid #b4b4b4; background: #f4f4f4; color: #888; text-align: right; line-height: 20px; padding-right: 2px; }
.end { margin-top: 9px; padding: 0 10px; }
.end button { width: 52px; height: 28px; border: 1px solid #707070; border-radius: 3px; background: linear-gradient(#f4f4f4 50%, #dcdcdc 51%, #d0d0d0); display: flex; align-items: center; justify-content: center; }
.end svg { width: 20px; height: 20px; }
```
